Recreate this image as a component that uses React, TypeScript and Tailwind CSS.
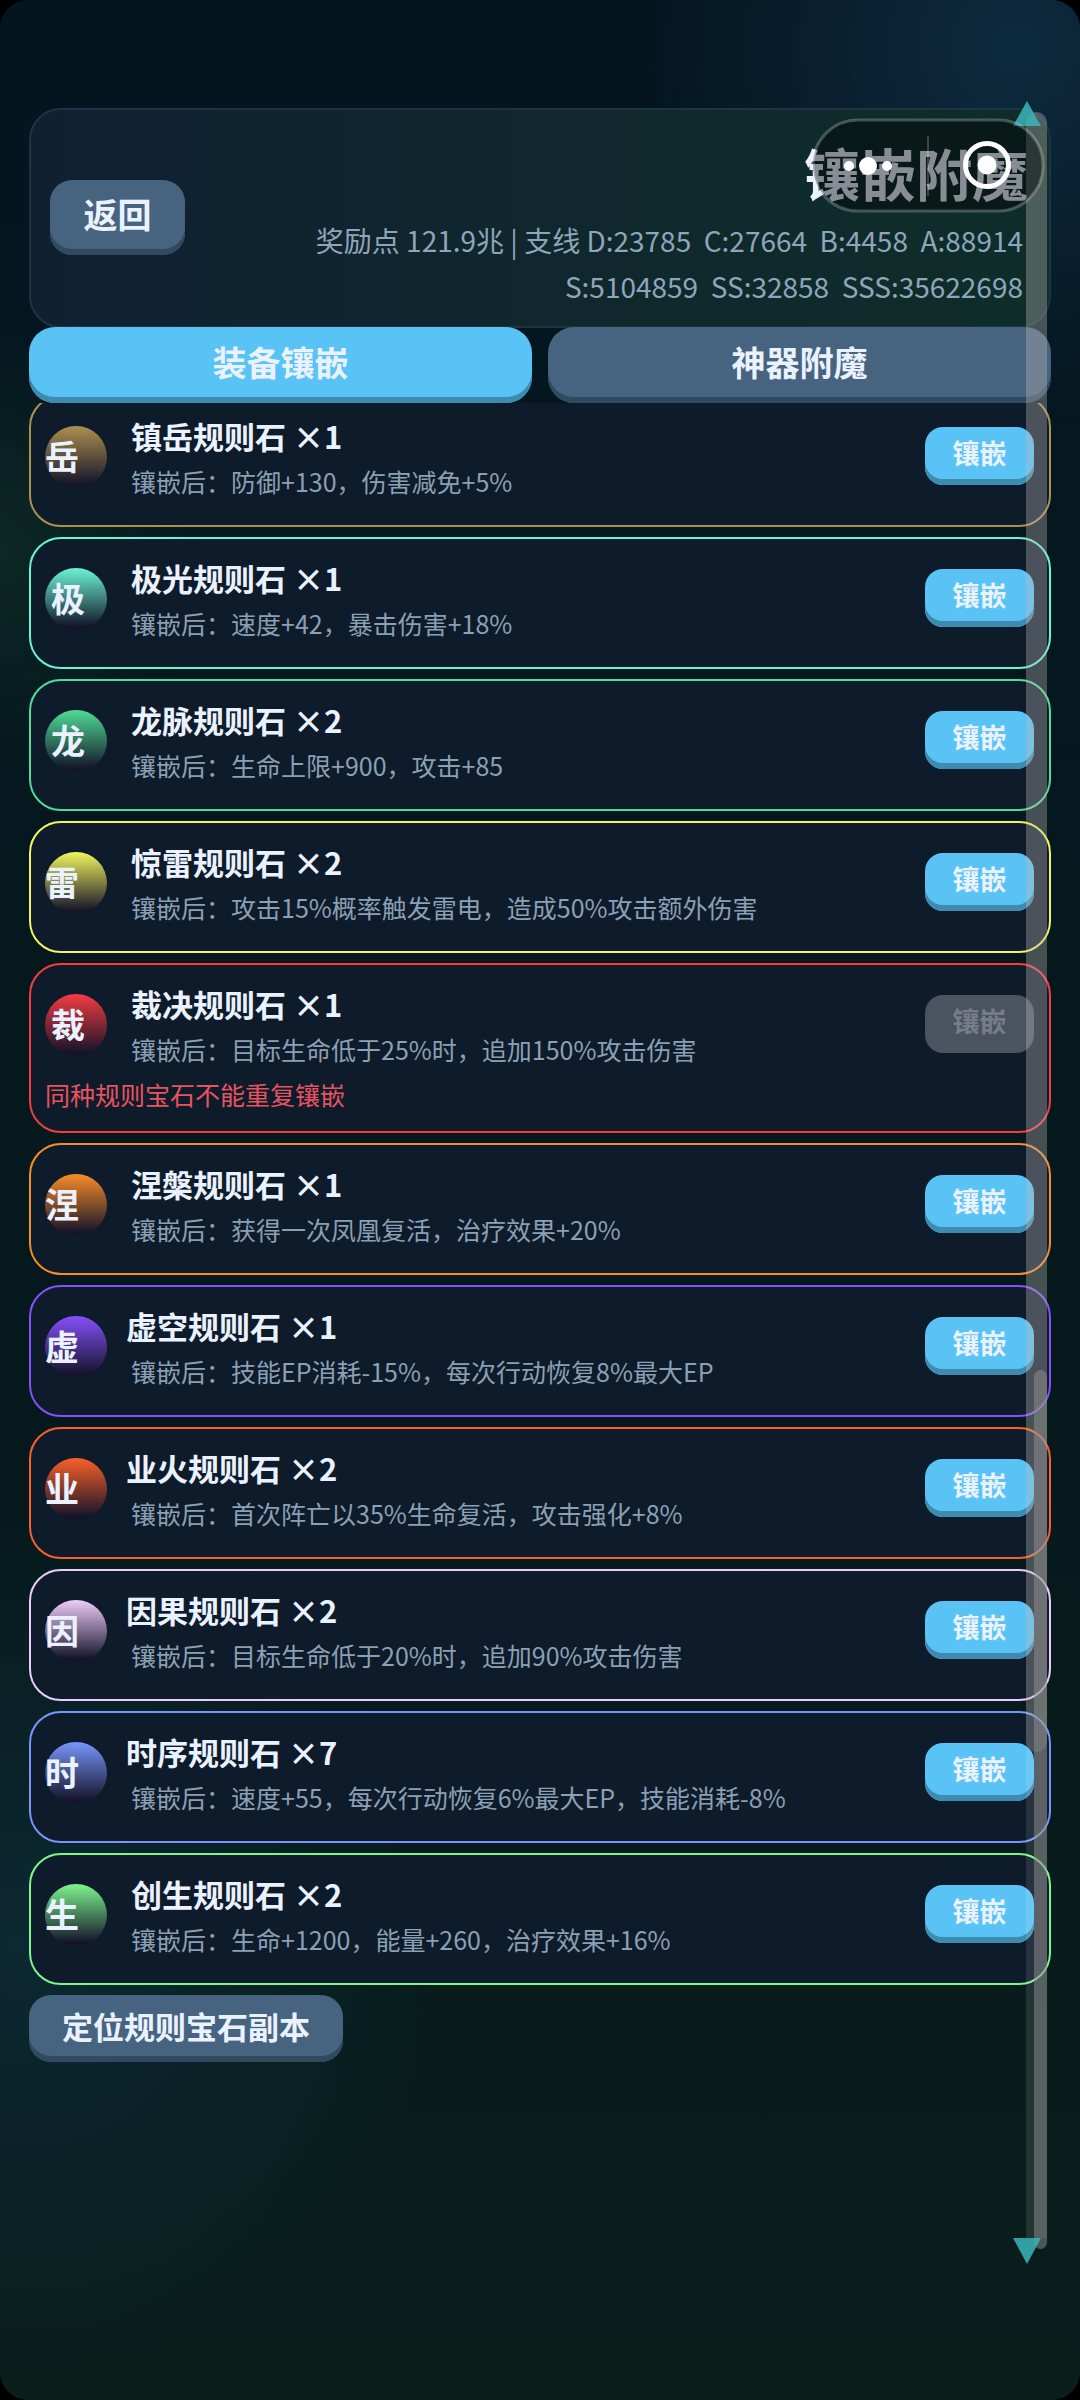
type Stone = {
  glyph: string;
  name: string;
  count: number;
  effect: string;
  color: string;
  glyphPad?: boolean;
  shiftName?: boolean;
  warning?: string;
};

const stones: Stone[] = [
  { glyph: "岳", name: "镇岳规则石", count: 1, effect: "防御+130，伤害减免+5%", color: "#ac9050" },
  { glyph: "极", name: "极光规则石", count: 1, effect: "速度+42，暴击伤害+18%", color: "#6af5d4", glyphPad: true },
  { glyph: "龙", name: "龙脉规则石", count: 2, effect: "生命上限+900，攻击+85", color: "#50dc96", glyphPad: true },
  { glyph: "雷", name: "惊雷规则石", count: 2, effect: "攻击15%概率触发雷电，造成50%攻击额外伤害", color: "#f2f55c" },
  {
    glyph: "裁",
    name: "裁决规则石",
    count: 1,
    effect: "目标生命低于25%时，追加150%攻击伤害",
    color: "#f53c42",
    glyphPad: true,
    warning: "同种规则宝石不能重复镶嵌",
  },
  { glyph: "涅", name: "涅槃规则石", count: 1, effect: "获得一次凤凰复活，治疗效果+20%", color: "#f88c28" },
  { glyph: "虚", name: "虚空规则石", count: 1, effect: "技能EP消耗-15%，每次行动恢复8%最大EP", color: "#8650fa", shiftName: true },
  { glyph: "业", name: "业火规则石", count: 2, effect: "首次阵亡以35%生命复活，攻击强化+8%", color: "#fa6028", shiftName: true },
  { glyph: "因", name: "因果规则石", count: 2, effect: "目标生命低于20%时，追加90%攻击伤害", color: "#eeccfa", shiftName: true },
  { glyph: "时", name: "时序规则石", count: 7, effect: "速度+55，每次行动恢复6%最大EP，技能消耗-8%", color: "#7896fa", shiftName: true },
  { glyph: "生", name: "创生规则石", count: 2, effect: "生命+1200，能量+260，治疗效果+16%", color: "#7cf58c" },
];

function StoneCard({ stone }: { stone: Stone }) {
  return (
    <li
      className="min-h-[132px] rounded-[32px] border-2 bg-[#0e1b2a] pt-[17px] pr-[15px] pb-[15px] pl-[14px]"
      style={{ borderColor: stone.color }}
    >
      <div className="flex items-start">
        <div
          className={`mt-3 size-[62px] shrink-0 rounded-full text-[34px] leading-[60px] font-bold ${stone.glyphPad ? "pl-[6px]" : ""}`}
          style={{ background: `linear-gradient(to bottom, ${stone.color}, #14142a 95%)` }}
        >
          {stone.glyph}
        </div>
        <div className="ml-6 min-w-0 flex-1">
          <h2 className={`text-[31px] leading-[44px] font-bold ${stone.shiftName ? "-ml-[5px]" : ""}`}>
            {stone.name} ×{stone.count}
          </h2>
          <p className="text-[25px] leading-[46px] text-[#8ba0b4]">镶嵌后：{stone.effect}</p>
        </div>
        <button
          type="button"
          disabled={Boolean(stone.warning)}
          className="mt-[13px] h-[58px] w-[109px] shrink-0 rounded-[18px] bg-[#59c3f6] pb-[6px] text-[27px] leading-[52px] font-bold shadow-[inset_0_-6px_0_#3f8bb0] disabled:bg-[#4a535f] disabled:text-[#767d87] disabled:shadow-none"
        >
          镶嵌
        </button>
      </div>
      {stone.warning && <p className="text-[25px] leading-[44px] text-[#e85360]">{stone.warning}</p>}
    </li>
  );
}

function SystemCapsule() {
  return (
    <svg className="absolute top-[118px] right-[35px]" width="234" height="95" viewBox="0 0 234 95">
      <rect x="2" y="2" width="230" height="91" rx="45" fill="#000" fillOpacity="0.42" stroke="#fff" strokeOpacity="0.24" strokeWidth="3" />
      <path d="M117 18v60" stroke="#fff" strokeOpacity="0.2" strokeWidth="2" />
      <g fill="#fff">
        <circle cx="38" cy="48" r="5" />
        <circle cx="57" cy="48" r="9" />
        <circle cx="76" cy="48" r="5" />
        <circle cx="176" cy="47" r="9.5" />
      </g>
      <circle cx="176" cy="47" r="21.5" fill="none" stroke="#fff" strokeWidth="5" />
    </svg>
  );
}

function Scrollbar() {
  return (
    <div className="pointer-events-none absolute top-[101px] right-[33px] bottom-[136px] w-[35px]">
      <div className="absolute top-[11px] right-0 bottom-[26px] w-[21px] rounded-t-xl bg-white/10" />
      <div className="absolute top-[11px] right-0 h-[1640px] w-[21px] rounded-xl bg-[#b4aaa5]/27" />
      <div className="absolute top-[1269px] right-0 bottom-[15px] w-[13px] rounded-full bg-[#909090]/50" />
      <svg className="absolute top-0 right-[6px]" width="28" height="25" viewBox="0 0 28 25">
        <path d="M14 0l14 25H0z" fill="#3bb5bb" fillOpacity="0.85" />
      </svg>
      <svg className="absolute right-[6px] bottom-0" width="28" height="26" viewBox="0 0 28 26">
        <path d="M14 26L0 0h28z" fill="#3bb5bb" fillOpacity="0.85" />
      </svg>
    </div>
  );
}

export default function App() {
  return (
    <div className="bg-black">
      <div className="relative min-h-screen overflow-hidden rounded-[28px] bg-[radial-gradient(circle_at_94%_2%,#0e2a3f_0,transparent_370px),radial-gradient(circle_at_0_23%,#0d2825_0,transparent_220px),radial-gradient(circle_at_2%_81%,#0c2832_0,transparent_420px),linear-gradient(to_bottom,#041520,#05191d_55%,#0a1e1c)] px-[29px] pt-[108px] font-['Noto_Sans_CJK_SC',sans-serif] text-[#eaf2ff]">
        <header className="flex min-h-[220px] items-center justify-between rounded-[32px] border-2 border-[#1e3444] bg-linear-to-r from-[#102033] via-[#10272d] to-[#0e2d29] pr-[21px] pl-[19px]">
          <button
            type="button"
            className="mb-[2px] h-[75px] w-[135px] shrink-0 rounded-[22px] bg-[#46647f] pb-2 text-[34px] leading-[67px] font-bold shadow-[inset_0_-6px_0_#324a5f]"
          >
            返回
          </button>
          <div className="text-right">
            <h1 className="text-[56px] leading-[90px] font-bold">镶嵌附魔</h1>
            <p className="pr-[5px] text-[28px] leading-[46px] whitespace-pre text-[#8ea5bb]">
              {"奖励点 121.9兆 | 支线 D:23785  C:27664  B:4458  A:88914\nS:5104859  SS:32858  SSS:35622698"}
            </p>
          </div>
        </header>

        <nav className="relative -mt-px flex gap-4">
          <button
            type="button"
            className="h-[76px] flex-1 rounded-[26px] bg-[#59c3f6] pb-[6px] text-[34px] leading-[70px] font-bold shadow-[inset_0_-6px_0_#3f8bb0]"
          >
            装备镶嵌
          </button>
          <button
            type="button"
            className="h-[76px] flex-1 rounded-[26px] bg-[#46647f] pb-[6px] text-[34px] leading-[70px] font-bold shadow-[inset_0_-6px_0_#324a5f]"
          >
            神器附魔
          </button>
        </nav>

        {/* The list is scrolled a little, its first card runs under the tabs */}
        <main className="overflow-hidden">
          <ul className="-mt-2 flex flex-col gap-[10px]">
            {stones.map((stone) => (
              <StoneCard key={stone.name} stone={stone} />
            ))}
          </ul>
          <button
            type="button"
            className="mt-[10px] h-[67px] rounded-[22px] bg-[#46647f] px-[33px] pb-[6px] text-[31px] leading-[59px] font-bold shadow-[inset_0_-6px_0_#324a5f]"
          >
            定位规则宝石副本
          </button>
        </main>

        <Scrollbar />
        <SystemCapsule />
      </div>
    </div>
  );
}
